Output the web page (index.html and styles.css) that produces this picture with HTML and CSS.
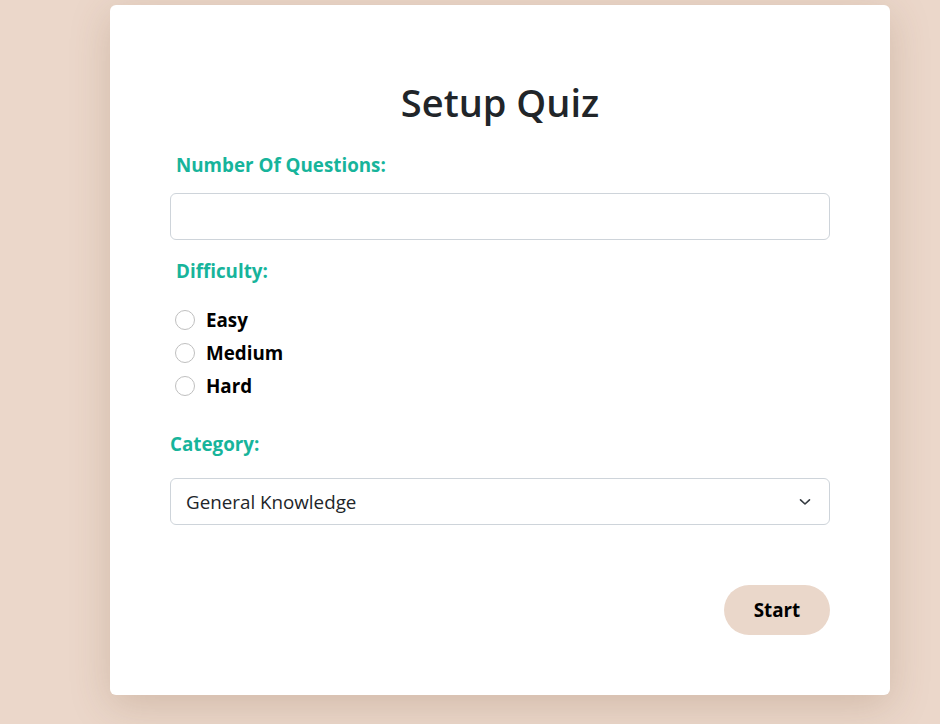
FILE: index.html
```html
<!DOCTYPE html>
<html>
<head>
<meta charset="utf-8">
<link rel="stylesheet" href="styles.css">
</head>
<body>
<main class="page">
  <section class="card">
    <h1 class="title">Setup Quiz</h1>
    <form class="form">
      <label class="label label-indent">Number Of Questions:</label>
      <input class="field" type="text">
      <label class="label label-indent label-difficulty">Difficulty:</label>
      <div class="radios">
        <label class="radio"><span class="circle"></span>Easy</label>
        <label class="radio"><span class="circle"></span>Medium</label>
        <label class="radio"><span class="circle"></span>Hard</label>
      </div>
      <label class="label label-category">Category:</label>
      <div class="field select">
        <span>General Knowledge</span>
        <svg class="chev" width="12" height="8" viewBox="0 0 12 8"><path d="M1.5 1.8 L6 6 L10.5 1.8" fill="none" stroke="#343a40" stroke-width="1.6" stroke-linecap="round" stroke-linejoin="round"/></svg>
      </div>
      <div class="actions">
        <button type="button" class="start">Start</button>
      </div>
    </form>
  </section>
</main>
</body>
</html>
```
FILE: styles.css
```css
* { box-sizing: border-box; }
html, body { margin: 0; height: 100%; }
body {
  background: #ebd7ca;
  font-family: "Open Sans", "Noto Sans", sans-serif;
  color: #212529;
  overflow: hidden;
}
.page {
  padding: 5px 0 0 110px;
}
.card {
  width: 780px;
  height: 690px;
  background: #fff;
  border-radius: 6px;
  box-shadow: 0 10px 40px rgba(120, 80, 50, 0.22);
  padding: 75px 60px 0 60px;
}
.title {
  margin: 0;
  text-align: center;
  font-size: 38px;
  font-weight: 600;
  line-height: 44px;
  color: #212529;
}
.form {
  display: flex;
  flex-direction: column;
  margin-top: 29px;
}
.label {
  color: #17b49b;
  font-weight: 700;
  font-size: 18.8px;
  line-height: 24px;
}
.label-indent { padding-left: 6px; }
.field {
  margin-top: 16px;
  width: 660px;
  height: 47px;
  border: 1px solid #ced4da;
  border-radius: 6px;
  font-family: inherit;
  font-size: 18px;
  outline: none;
}
.label-difficulty { margin-top: 19px; }
.radios {
  display: flex;
  flex-direction: column;
  gap: 13px;
  margin-top: 27px;
  padding-left: 5px;
}
.radio {
  display: flex;
  align-items: center;
  gap: 11px;
  font-weight: 700;
  font-size: 18.8px;
  line-height: 20px;
  color: #000;
}
.circle {
  width: 20px;
  height: 20px;
  border: 1px solid #bfbfbf;
  border-radius: 50%;
  flex: none;
}
.label-category { margin-top: 36px; }
.select {
  margin-top: 22px;
  display: flex;
  align-items: center;
  justify-content: space-between;
  padding: 0 18px 0 15px;
  color: #212529;
  font-size: 18.8px;
}
.actions {
  display: flex;
  justify-content: flex-end;
  margin-top: 60px;
}
.start {
  width: 106px;
  height: 50px;
  border: none;
  border-radius: 25px;
  background: #ead7ca;
  color: #000;
  font-family: inherit;
  font-weight: 700;
  font-size: 18.8px;
}
```
